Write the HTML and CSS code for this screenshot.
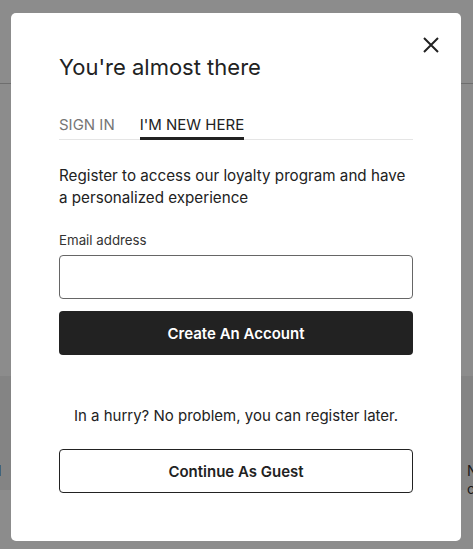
FILE: index.html
```html
<!DOCTYPE html>
<html lang="en">
<head>
<meta charset="utf-8">
<title>Register</title>
<link rel="stylesheet" href="styles.css">
</head>
<body>
<div class="page">
  <header class="page-header"></header>
  <section class="page-band">
    <span class="band-left">l</span>
    <span class="band-right">N<br>cc</span>
  </section>
</div>
<div class="overlay"></div>
<div class="modal" role="dialog">
  <button class="close" aria-label="Close">
    <svg width="16" height="16" viewBox="0 0 16 16"><path d="M1 1L15 15M15 1L1 15" stroke="#222" stroke-width="2" fill="none"/></svg>
  </button>
  <h2 class="title">You're almost there</h2>
  <div class="tabs">
    <span class="tab">SIGN IN</span>
    <span class="tab active">I'M NEW HERE</span>
  </div>
  <p class="intro">Register to access our loyalty program and have a personalized experience</p>
  <label class="label" for="email">Email address</label>
  <input class="input" id="email" type="email">
  <button class="btn btn-dark">Create An Account</button>
  <p class="hurry">In a hurry? No problem, you can register later.</p>
  <button class="btn btn-outline">Continue As Guest</button>
</div>
</body>
</html>
```
FILE: styles.css
```css
* { box-sizing: border-box; }
html, body { margin: 0; padding: 0; }
body {
  width: 473px;
  height: 549px;
  overflow: hidden;
  font-family: Inter, "Liberation Sans", Arial, sans-serif;
  color: #222;
  background: #fff;
}
.page { height: 549px; display: flex; flex-direction: column; }
.page-header { height: 84px; border-bottom: 1px solid #c8c8c8; flex: none; }
.page-band {
  margin-top: 292px;
  height: 114px;
  background: #f0f0f0;
  display: flex;
  justify-content: space-between;
  align-items: flex-start;
  padding-top: 86px;
  font-size: 14px;
  color: #333;
}
.band-left { margin-left: -2px; }
.band-right { margin-right: -10px; line-height: 18px; }
.overlay {
  position: fixed;
  inset: 0;
  background: rgba(0,0,0,0.45);
}
.modal {
  position: fixed;
  left: 11px;
  top: 13px;
  width: 450px;
  height: 528px;
  background: #fff;
  border-radius: 5px;
  padding: 40px 48px 0;
  display: flex;
  flex-direction: column;
}
.close {
  position: absolute;
  top: 22px;
  right: 20px;
  width: 20px;
  height: 20px;
  padding: 0;
  border: 0;
  background: none;
  display: flex;
  align-items: center;
  justify-content: center;
}
.title {
  margin: 0;
  font-size: 22px;
  font-weight: 400;
  line-height: 28px;
  color: #222;
}
.tabs {
  margin-top: 34px;
  display: flex;
  gap: 25px;
  border-bottom: 1px solid #e5e5e5;
}
.tab {
  font-size: 15px;
  line-height: 20px;
  padding-bottom: 2px;
  color: #767676;
  border-bottom: 3px solid transparent;
  margin-bottom: -1px;
}
.tab.active { color: #222; border-bottom-color: #222; }
.intro {
  margin: 25px 0 0;
  font-size: 15.2px;
  line-height: 22px;
  color: #222;
}
.label {
  margin-top: 23px;
  font-size: 13.3px;
  line-height: 16px;
  color: #333;
}
.input {
  margin-top: 7px;
  height: 44px;
  border: 1px solid #666;
  border-radius: 4px;
  font: inherit;
}
.btn {
  height: 44px;
  border-radius: 4px;
  font-family: inherit;
  font-size: 15px;
  font-weight: 600;
}
.btn-dark {
  margin-top: 12px;
  background: #222;
  color: #fff;
  border: 0;
}
.hurry {
  margin: 51px 0 0;
  text-align: center;
  font-size: 15px;
  line-height: 20px;
  color: #222;
}
.btn-outline {
  margin-top: 23px;
  background: #fff;
  color: #222;
  border: 1px solid #222;
}
```
